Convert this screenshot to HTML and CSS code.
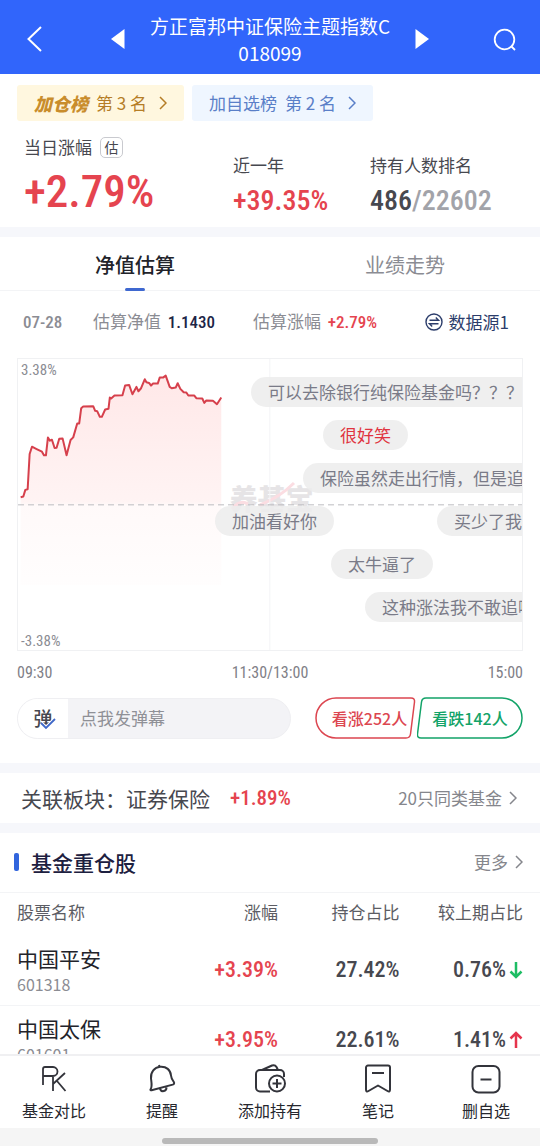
FILE: index.html
```html
<!DOCTYPE html>
<html lang="zh-CN">
<head>
  <meta charset="UTF-8">
  <meta name="viewport" content="width=device-width, initial-scale=1.0">
  <title>方正富邦中证保险主题指数C</title>
  <link rel="stylesheet" href="styles.css">
</head>
<body>
  <header class="topbar">
    <button class="icon-btn" aria-label="返回">
      <svg width="24" height="28" viewBox="0 0 24 28"><path d="M18 2 5.500 14 18 26" fill="none" stroke="#fff" stroke-width="2"/></svg>
    </button>
    <div class="switcher">
      <button class="icon-btn" aria-label="上一只">
        <svg width="14" height="20" viewBox="0 0 14 20"><path d="M13.500 0v20L0 10z" fill="#fff"/></svg>
      </button>
      <h1>方正富邦中证保险主题指数C<br>018099</h1>
      <button class="icon-btn" aria-label="下一只">
        <svg width="14" height="20" viewBox="0 0 14 20"><path d="M.5 0v20L14 10z" fill="#fff"/></svg>
      </button>
    </div>
    <button class="icon-btn" aria-label="搜索">
      <svg width="24" height="24" viewBox="0 0 24 24" fill="none" stroke="#fff" stroke-width="1.800"><circle cx="11.500" cy="12.500" r="9.800"/><path d="m18.500 19.500 3.500 3.500"/></svg>
    </button>
  </header>

  <main>
    <section class="summary">
      <div class="badges">
        <a href="#" class="badge gold">
          <b>加仓榜</b>
          <span>第 3 名</span>
          <svg class="chevron" viewBox="0 0 8 14"><path d="m1 1 6 6-6 6"/></svg>
        </a>
        <a href="#" class="badge blue">
          <span>加自选榜</span>
          <span>第 2 名</span>
          <svg class="chevron" viewBox="0 0 8 14"><path d="m1 1 6 6-6 6"/></svg>
        </a>
      </div>
      <div class="stats">
        <div class="stat">
          <div class="label">当日涨幅 <span class="tag">估</span></div>
          <div class="num big up">+2.79%</div>
        </div>
        <div class="stat">
          <div class="label">近一年</div>
          <div class="num mid up">+39.35%</div>
        </div>
        <div class="stat">
          <div class="label">持有人数排名</div>
          <div class="num mid">486<span class="total">/22602</span></div>
        </div>
      </div>
    </section>

    <section class="estimate">
      <nav class="tabs">
        <button class="tab active">净值估算</button>
        <button class="tab">业绩走势</button>
      </nav>
      <div class="info">
        <span class="num date">07-28</span>
        <span>估算净值 <b class="num value">1.1430</b></span>
        <span>估算涨幅 <b class="num up">+2.79%</b></span>
        <button class="source">
          <svg width="18" height="18" viewBox="0 0 18 18" fill="none" stroke="#2c3d6b" stroke-width="1.400"><circle cx="9" cy="9" r="8"/><path d="M4.500 7.200h9L10.800 4.600M13.500 10.800h-9l2.700 2.600"/></svg>
          数据源1
        </button>
      </div>

      <div class="chart">
        <div class="watermark">养基宝
          <svg viewBox="0 0 84 34" fill="none" stroke="#fbdde2" stroke-width="3"><path d="M2 28q8-10 16-5M30 24q20-8 34-22"/></svg>
        </div>
        <svg class="plot" viewBox="54 24 1515 876" preserveAspectRatio="none">
          <defs>
            <linearGradient id="fade" x1="0" y1="0" x2="0" y2="1">
              <stop offset="0" stop-color="#ff5a5a" stop-opacity=".14"/>
              <stop offset="0.600" stop-color="#ff5a5a" stop-opacity=".07"/>
              <stop offset="0.620" stop-color="#ff5a5a" stop-opacity=".035"/>
              <stop offset="1" stop-color="#ff5a5a" stop-opacity=".01"/>
            </linearGradient>
          </defs>
          <path class="axis" d="M811 24v876"/>
          <path fill="url(#fade)" d="M62 440 70 438 76 418 83 416 89 310 96 288 110 295 126 303 132 314 138 314 144 260 150 270 156 267 164 292 170 291 178 264 188 263 200 314 212 268 220 260 232 218 238 218 244 172 250 167 280 166 286 180 292 181 300 198 306 198 316 176 326 174 330 140 334 143 344 134 368 133 376 104 388 102 398 130 410 108 416 121 424 112 435 85 440 94 448 96 454 104 460 98 474 98 480 80 490 80 498 74 510 108 516 112 528 110 534 97 542 114 552 124 560 125 566 134 584 134 590 142 608 143 614 156 620 149 640 150 652 160 665 140V705H62z"/>
          <path class="zero" d="M54 463h1515"/>
          <path class="line" d="M62 440 70 438 76 418 83 416 89 310 96 288 110 295 126 303 132 314 138 314 144 260 150 270 156 267 164 292 170 291 178 264 188 263 200 314 212 268 220 260 232 218 238 218 244 172 250 167 280 166 286 180 292 181 300 198 306 198 316 176 326 174 330 140 334 143 344 134 368 133 376 104 388 102 398 130 410 108 416 121 424 112 435 85 440 94 448 96 454 104 460 98 474 98 480 80 490 80 498 74 510 108 516 112 528 110 534 97 542 114 552 124 560 125 566 134 584 134 590 142 608 143 614 156 620 149 640 150 652 160 665 140"/>
        </svg>
        <span class="num limit top">3.38%</span>
        <span class="num limit bottom">-3.38%</span>
        <span class="danmaku d1">可以去除银行纯保险基金吗？？？</span>
        <span class="danmaku d2 mine">很好笑</span>
        <span class="danmaku d3">保险虽然走出行情，但是追</span>
        <span class="danmaku d4">加油看好你</span>
        <span class="danmaku d5">买少了我</span>
        <span class="danmaku d6">太牛逼了</span>
        <span class="danmaku d7">这种涨法我不敢追啊</span>
      </div>
      <div class="times num"><span>09:30</span><span>11:30/13:00</span><span>15:00</span></div>

      <div class="interact">
        <div class="send">
          <button class="toggle" aria-label="弹幕开关">弹
            <svg width="16" height="12" viewBox="0 0 16 12"><path d="m1 5 5 5 9-9" fill="none" stroke="#fff" stroke-width="4"/><path d="m1 5 5 5 9-9" fill="none" stroke="#3f68c8" stroke-width="1.800"/></svg>
          </button>
          <input type="text" placeholder="点我发弹幕" aria-label="点我发弹幕">
        </div>
        <div class="votes">
          <button class="vote rise">
            <svg viewBox="0 0 102 42"><path d="M21 1h75q4 0 3.500 4l-4 32q-.5 4-4.500 4H21a20 20 0 0 1 0-40z"/></svg>
            <span>看涨252人</span>
          </button>
          <button class="vote fall">
            <svg viewBox="0 0 106 42"><path d="M85 1H9q-4 0-4.500 4l-4 32q-.5 4 3.500 4h81a20 20 0 0 0 0-40z"/></svg>
            <span>看跌142人</span>
          </button>
        </div>
      </div>
    </section>

    <section class="related">
      <span class="name">关联板块：证券保险</span>
      <span class="num up">+1.89%</span>
      <a href="#" class="more">20只同类基金 <svg class="chevron" viewBox="0 0 8 14"><path d="m1 1 6 6-6 6"/></svg></a>
    </section>

    <section class="holdings">
      <div class="heading">
        <h2>基金重仓股</h2>
        <a href="#" class="more">更多 <svg class="chevron" viewBox="0 0 8 14"><path d="m1 1 6 6-6 6"/></svg></a>
      </div>
      <table>
        <thead>
          <tr><th>股票名称</th><th>涨幅</th><th>持仓占比</th><th>较上期占比</th></tr>
        </thead>
        <tbody>
          <tr>
            <td><div class="stock">中国平安</div><div class="code">601318</div></td>
            <td class="num up">+3.39%</td>
            <td class="num">27.42%</td>
            <td class="num">0.76%<svg class="arrow down" viewBox="0 0 14 18"><path d="M7 1v15M1.500 10.500 7 16l5.500-5.500"/></svg></td>
          </tr>
          <tr>
            <td><div class="stock">中国太保</div><div class="code">601601</div></td>
            <td class="num up">+3.95%</td>
            <td class="num">22.61%</td>
            <td class="num">1.41%<svg class="arrow" viewBox="0 0 14 18"><path d="M7 17V2M1.500 7.500 7 2l5.500 5.500"/></svg></td>
          </tr>
        </tbody>
      </table>
    </section>
  </main>

  <nav class="toolbar">
    <button>
      <svg viewBox="0 0 32 32"><path stroke-width="1.800" d="M5 22V6q0-2 2-2h8a4.500 4.500 0 0 1 0 9H5M15 13v15M27 10 15 21M19 18l8.500 10"/></svg>
      基金对比
    </button>
    <button>
      <svg viewBox="0 0 32 32"><path d="M13.500 3.500 13 2M4.500 26.500c2-3 1-7 .5-11C4.500 9 8.500 4.500 14 3.800c6.500-.6 10.500 3.200 11 8.700.3 3 1.500 4.500 2.700 6.300 1 1.500.3 2.400-1 2.800L6.500 27c-1.500.4-2.500.3-2-.5zM14 26c1.500 3.500 6.500 2.500 6.500-1.500"/></svg>
      提醒
    </button>
    <button>
      <svg viewBox="0 0 32 32"><path d="M16 28.500H6a4 4 0 0 1-4-4V11a4 4 0 0 1 4-4h20a4 4 0 0 1 4 4v3M8 7l10-4.500q3-1 4.500 1.500L24 7"/><circle cx="23" cy="20.500" r="8"/><path d="M23 16v9M18.500 20.500h9"/></svg>
      添加持有
    </button>
    <button>
      <svg viewBox="0 0 32 32"><path d="M6 2.500h20a2 2 0 0 1 2 2v22q0 3-2.500 1.500L16 22.500 6.500 28Q4 29.500 4 26.500v-22a2 2 0 0 1 2-2zM10 10h12"/></svg>
      笔记
    </button>
    <button>
      <svg viewBox="0 0 32 32"><rect x="2.500" y="3" width="27" height="26.500" rx="6"/><path d="M10.500 16.500h11"/></svg>
      删自选
    </button>
  </nav>
  <div class="home-bar"><span></span></div>
</body>
</html>
```
FILE: styles.css
```css
* {
  box-sizing: border-box;
}
body {
  margin: 0;
  height: 100vh;
  display: flex;
  flex-direction: column;
  background: #fff;
  color: #47484f;
  font-family: "Noto Sans CJK SC", sans-serif;
  font-size: 17px;
  line-height: 24px;
}
button {
  padding: 0;
  border: none;
  background: none;
  color: inherit;
  font: inherit;
  cursor: pointer;
}
a {
  color: inherit;
  text-decoration: none;
}
.num {
  font-family: "Roboto Condensed", "Liberation Sans Narrow", Roboto, sans-serif;
  font-weight: 500;
}
.up {
  color: #e5444f;
}
.chevron {
  width: 8px;
  height: 14px;
  fill: none;
  stroke: currentColor;
  stroke-width: 1.5;
}

/* header */
.topbar {
  flex: none;
  display: flex;
  align-items: center;
  justify-content: space-between;
  padding: 12px 23px 8px;
  background: #3165fb;
  color: #fff;
}
.topbar svg {
  display: block;
}
.switcher {
  display: flex;
  align-items: center;
  gap: 25px;
}
.topbar h1 {
  margin: 0;
  font-size: 19px;
  line-height: 27px;
  font-weight: 400;
  text-align: center;
}
main {
  flex: 1;
  min-height: 0;
  overflow: hidden;
}
section {
  border-bottom: 10px solid #f6f7fb;
}

/* summary */
.summary {
  padding: 11px 17px 2px;
}
.badges {
  display: flex;
  gap: 8px;
}
.badge {
  display: flex;
  align-items: center;
  gap: 8px;
  height: 36px;
  padding: 0 17px;
  border-radius: 3px;
}
.badge .chevron {
  margin-left: 4px;
}
.gold {
  background: #fff7df;
  color: #b57d26;
}
.gold b {
  font-size: 18px;
  font-weight: 900;
  font-style: italic;
  color: #c98d2c;
}
.blue {
  background: #eff6ff;
  color: #5a7fc8;
}
.stats {
  display: grid;
  grid-template-columns: 209px 137px 1fr;
  align-items: end;
  padding: 14px 0 0 7px;
}
.label {
  display: flex;
  align-items: center;
  gap: 8px;
}
.tag {
  width: 23px;
  height: 21px;
  border: 1px solid #c9cacf;
  border-radius: 5px;
  font-size: 14px;
  line-height: 18px;
  text-align: center;
}
.big {
  font-size: 45px;
  line-height: 66px;
}
.mid {
  font-size: 28px;
  line-height: 48px;
}
.total {
  color: #a2a3a9;
}

/* estimate */
.tabs {
  display: flex;
  border-bottom: 1px solid #f3f4f6;
}
.tab {
  position: relative;
  flex: 1;
  height: 53px;
  padding-top: 2px;
  font-size: 20px;
  color: #8b8c93;
}
.tab.active {
  color: #22232a;
  font-weight: 500;
}
.tab.active::after {
  content: "";
  position: absolute;
  left: 50%;
  bottom: -1px;
  width: 20px;
  height: 3px;
  margin-left: -10px;
  border-radius: 2px;
  background: #3f68d0;
}
.info {
  display: grid;
  grid-template-columns: 70px 160px 1fr auto;
  align-items: center;
  padding: 18px 31px 24px 23px;
  color: #8b8c93;
}
.info .num {
  font-size: 17px;
  margin-left: 3px;
}
.info .date {
  margin: 0;
}
.info .value {
  color: #1d2547;
}
.source {
  display: flex;
  align-items: center;
  gap: 6px;
  color: #2c3d6b;
}
.chart {
  position: relative;
  height: 293px;
  margin: 0 17px;
  border: 1px solid #f0f1f3;
  overflow: hidden;
}
.plot {
  position: absolute;
  inset: 0;
  width: 100%;
  height: 100%;
}
.plot path {
  vector-effect: non-scaling-stroke;
}
.axis {
  stroke: #f3f4f6;
  stroke-width: 1;
}
.zero {
  stroke: #bcbcc0;
  stroke-width: 1;
  stroke-dasharray: 6 4;
}
.line {
  fill: none;
  stroke: #d6404c;
  stroke-width: 2;
  stroke-linejoin: round;
}
.watermark {
  position: absolute;
  left: 42%;
  top: 122px;
  font-size: 28px;
  line-height: 34px;
  font-weight: 900;
  color: #e6e4e6;
}
.watermark svg {
  position: absolute;
  left: 0;
  top: 0;
  width: 84px;
  height: 34px;
}
.limit {
  position: absolute;
  left: 3px;
  font-size: 15px;
  line-height: 18px;
  font-weight: 400;
  color: #8b8c93;
}
.top {
  top: 2px;
}
.bottom {
  bottom: 0;
}
.danmaku {
  position: absolute;
  height: 30px;
  padding: 0 17px;
  border-radius: 15px;
  background: rgba(236, 236, 236, .85);
  color: #7a7b88;
  line-height: 30px;
  white-space: nowrap;
}
.danmaku.mine {
  color: #e03440;
}
.d1 {
  left: 233px;
  top: 18px;
}
.d2 {
  left: 305px;
  top: 61px;
}
.d3 {
  left: 285px;
  top: 104px;
}
.d4 {
  left: 197px;
  top: 147px;
}
.d5 {
  left: 419px;
  top: 147px;
}
.d6 {
  left: 313px;
  top: 190px;
}
.d7 {
  left: 347px;
  top: 233px;
}
.times {
  display: flex;
  justify-content: space-between;
  padding: 10px 17px 12px;
  font-size: 16px;
  font-weight: 400;
  color: #7f8087;
}
.interact {
  display: flex;
  align-items: center;
  gap: 24px;
  padding: 0 17px 24px;
}
.send {
  flex: 1;
  display: flex;
  height: 41px;
  border: 1px solid #efeff2;
  border-radius: 21px;
  background: #f3f3f6;
  overflow: hidden;
}
.toggle {
  position: relative;
  width: 50px;
  background: #fff;
  font-size: 19px;
  font-weight: 500;
}
.toggle svg {
  position: absolute;
  left: 22px;
  bottom: 8px;
}
.send input {
  flex: 1;
  min-width: 0;
  padding: 0 12px;
  border: none;
  outline: none;
  background: none;
  font: inherit;
}
.send input::placeholder {
  color: #8f9096;
}
.votes {
  display: flex;
}
.vote {
  position: relative;
  width: 102px;
  height: 42px;
  font-size: 16px;
  font-weight: 500;
}
.vote svg {
  position: absolute;
  inset: 0;
  width: 100%;
  height: 100%;
  fill: none;
  stroke: currentColor;
  stroke-width: 1.5;
}
.rise {
  color: #dc4650;
  padding-left: 7px;
}
.fall {
  width: 106px;
  color: #12a368;
}

/* related sector */
.related {
  display: flex;
  align-items: center;
  height: 60px;
  padding: 0 23px 0 21px;
}
.related .name {
  font-size: 21px;
}
.related .num {
  margin-left: 20px;
  font-size: 21px;
}
.more {
  display: flex;
  align-items: center;
  gap: 7px;
  margin-left: auto;
  color: #85868c;
}

/* holdings */
.holdings {
  border: none;
}
.heading {
  display: flex;
  align-items: center;
  height: 60px;
  padding: 0 17px 2px 14px;
  border-bottom: 1px solid #f3f4f6;
}
.heading h2 {
  display: flex;
  align-items: center;
  gap: 12px;
  margin: 0;
  font-size: 21px;
  font-weight: 500;
  color: #1d2040;
}
.heading h2::before {
  content: "";
  width: 5px;
  height: 18px;
  border-radius: 2px;
  background: #3165dd;
}
table {
  width: 100%;
  border-collapse: collapse;
  table-layout: fixed;
}
th,
td {
  padding: 0;
  text-align: right;
}
th {
  height: 42px;
  padding-bottom: 4px;
  font-weight: 400;
  color: #5c5d64;
}
th:first-child,
td:first-child {
  width: 29%;
  padding-left: 17px;
  text-align: left;
}
th:last-child,
td:last-child {
  width: 26%;
  padding-right: 17px;
}
tbody tr {
  height: 70px;
  border-bottom: 1px solid #f3f4f6;
}
td.num {
  font-size: 22px;
}
.stock {
  font-size: 21px;
  line-height: 28px;
  color: #22232a;
}
.code {
  font-size: 16px;
  color: #8b8c93;
}
.arrow {
  width: 14px;
  height: 18px;
  margin-left: 3px;
  vertical-align: -2px;
  fill: none;
  stroke: #e5344c;
  stroke-width: 2.5;
}
.arrow.down {
  stroke: #1ebd64;
}

/* bottom toolbar */
.toolbar {
  flex: none;
  display: flex;
  height: 74px;
  border-top: 2px solid #f0f0f2;
  background: #fff;
}
.toolbar button {
  flex: 1;
  display: flex;
  flex-direction: column;
  align-items: center;
  gap: 3px;
  padding-top: 7px;
  font-size: 16px;
  color: #26272e;
}
.toolbar svg {
  width: 32px;
  height: 32px;
  fill: none;
  stroke: #33343b;
  stroke-width: 2;
  stroke-linejoin: round;
}
.home-bar {
  flex: none;
  display: flex;
  justify-content: center;
  height: 18px;
  padding-top: 10px;
  background: #f5f5f5;
}
.home-bar span {
  width: 40%;
  height: 6px;
  border-radius: 3px;
  background: #b9b9b9;
}
```
